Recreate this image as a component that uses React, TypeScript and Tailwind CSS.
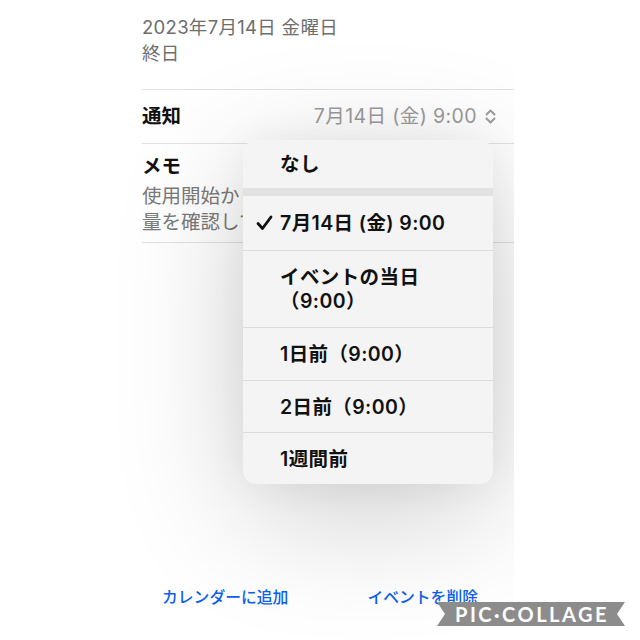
import React from "react";

const jp = { fontFamily: '"Inter", "Noto Sans CJK JP", sans-serif' };

function UpDownChevron() {
  return (
    <svg width="13" height="17" viewBox="0 0 13 17" fill="none" stroke="#9b9b9b" strokeWidth="1.9" strokeLinecap="round" strokeLinejoin="round">
      <path d="M2.5 6.5 L6.5 2.5 L10.5 6.5" />
      <path d="M2.5 10.5 L6.5 14.5 L10.5 10.5" />
    </svg>
  );
}

function Check() {
  return (
    <svg width="17" height="16" viewBox="0 0 17 16" fill="none" stroke="#111" strokeWidth="2.8" strokeLinecap="round" strokeLinejoin="round">
      <path d="M2 8.5 L6.5 13.5 L15 2" />
    </svg>
  );
}

function MenuRow({ children, check, h }: { children: React.ReactNode; check?: boolean; h: string }) {
  return (
    <div className={`flex items-center ${h} relative`}>
      {check && (
        <span className="absolute left-[13px] top-1/2 -translate-y-1/2">
          <Check />
        </span>
      )}
      <div className="pl-[37px] text-[19.5px] leading-[24px] tracking-[0.4px] font-semibold text-[#111]">{children}</div>
    </div>
  );
}

export default function App() {
  return (
    <div className="w-[640px] h-[640px] bg-white relative overflow-hidden" style={jp}>
      <div className="ml-[116px] w-[398px] h-full relative overflow-hidden bg-white">
        {/* event detail */}
        <div className="h-[89px] pl-[26px] pt-[14px] text-[18.5px] tracking-[0.3px]">
          <div className="leading-[26px] text-[#6e6e6e]">2023年7月14日 金曜日</div>
          <div className="leading-[26px] text-[#6e6e6e]">終日</div>
        </div>
        <div className="ml-[26px] border-t border-[#e2e2e2]" />
        <div className="ml-[26px] h-[53px] flex items-center justify-between pr-[17px]">
          <span className="text-[19.5px] font-bold text-[#111]">通知</span>
          <span className="flex items-center gap-[7px] text-[19.5px] tracking-[0.4px] text-[#9b9b9b]">
            7月14日 (金) 9:00
            <UpDownChevron />
          </span>
        </div>
        <div className="ml-[26px] border-t border-[#e2e2e2]" />
        <div className="h-[98px] pl-[26px] pt-[9px] text-[19.5px]">
          <div className="leading-[26px] font-bold text-[#111]">メモ</div>
          <div className="leading-[26px] text-[#7a7a7a] mt-[4px]">使用開始から</div>
          <div className="leading-[26px] text-[#7a7a7a]">量を確認して</div>
        </div>
        <div className="ml-[26px] border-t border-[#e2e2e2]" />

        {/* toolbar */}
        <div className="absolute left-0 right-0 top-[586px] flex text-[15.8px] text-[#0a60f0] font-medium">
          <span className="ml-[46px]">カレンダーに追加</span>
          <span className="ml-[79px]">イベントを削除</span>
        </div>

        {/* notification menu */}
        <div className="absolute left-[127px] top-[140px] w-[250px] rounded-[13px] bg-[#f4f4f4] shadow-[0_30px_130px_rgba(0,0,0,0.2),0_0_40px_rgba(0,0,0,0.05)] overflow-hidden">
          <MenuRow h="h-[48px]">なし</MenuRow>
          <div className="h-[8px] bg-[#e2e2e2]" />
          <MenuRow h="h-[54px]" check>
            7月14日 (金) 9:00
          </MenuRow>
          <div className="border-t border-[#dcdcdc]" />
          <MenuRow h="h-[76px]">
            <div>イベントの当日</div>
            <div>（9:00）</div>
          </MenuRow>
          <div className="border-t border-[#dcdcdc]" />
          <MenuRow h="h-[52px]">1日前（9:00）</MenuRow>
          <div className="border-t border-[#dcdcdc]" />
          <MenuRow h="h-[51px]">2日前（9:00）</MenuRow>
          <div className="border-t border-[#dcdcdc]" />
          <MenuRow h="h-[51px]">1週間前</MenuRow>
        </div>
      </div>

      {/* watermark ribbon */}
      <div className="absolute left-[437px] top-[602px] w-[188px] h-[24px]">
        <svg className="absolute inset-0" width="188" height="24" viewBox="0 0 188 24">
          <polygon points="0,0 188,0 180,12 188,24 0,24 8,12" fill="#8c8c8c" />
        </svg>
        <div
          className="absolute inset-0 flex items-center justify-center pl-[2px] text-white text-[20px] font-bold tracking-[2.5px] leading-none"
          style={{ fontFamily: '"Lato", "Open Sans", sans-serif' }}
        >
          PIC·COLLAGE
        </div>
      </div>
    </div>
  );
}
